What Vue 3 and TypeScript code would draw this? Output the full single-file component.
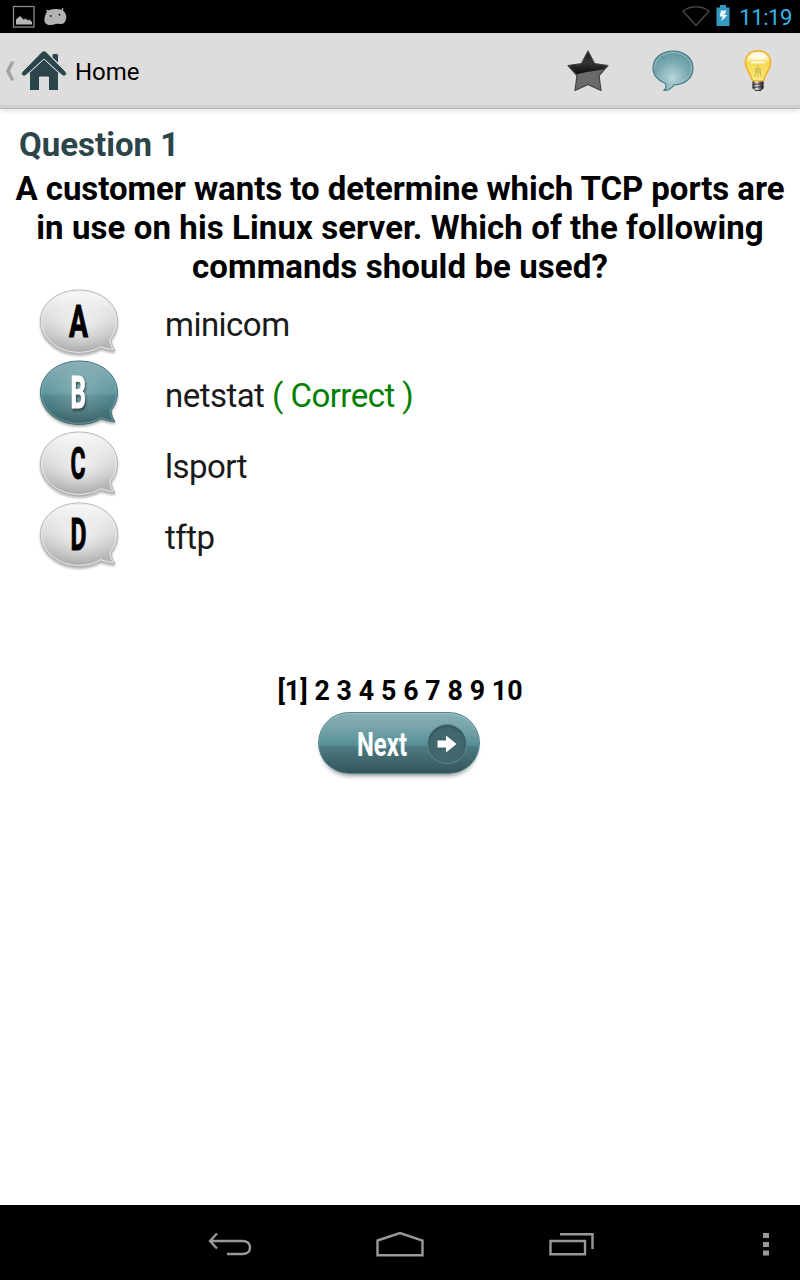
<script setup lang="ts">
import { ref } from "vue";

interface Answer {
  letter: string;
  text: string;
  correct: boolean;
  x: number;
  width: number;
}

const answers: Answer[] = [
  { letter: "A", text: "minicom", correct: false, x: 31, width: 19 },
  { letter: "B", text: "netstat", correct: true, x: 32.5, width: 15.5 },
  { letter: "C", text: "lsport", correct: false, x: 32.5, width: 15 },
  { letter: "D", text: "tftp", correct: false, x: 32.5, width: 16 },
];

const selected = ref(1);
const current = ref(1);
const pages = [1, 2, 3, 4, 5, 6, 7, 8, 9, 10];
const pageLabel = (page: number) => (page === current.value ? `[${page}]` : `${page}`);
const handleNext = () => {
  if (current.value < pages.length) current.value++;
};
</script>

<template>
  <div class="screen">
    <div class="status-bar">
      <div class="status-group">
        <svg class="picture" width="24" height="24" viewBox="0 0 24 24">
          <rect x="1.5" y="1.5" width="20.500" height="20.500" fill="none" stroke="#8c8c8c" stroke-width="1.300" />
          <path d="M4 19.500v-5l4-3.500 3.500 3.500 2.500-1 1.500 2 2-1 2.500 2.500v2.500z" fill="#b5b5b5" />
        </svg>
        <svg width="24" height="22" viewBox="0 0 24 22">
          <path
            d="M4 5.500Q11 3 18.500 5Q22.500 8 22.300 13Q21.500 18.500 17.500 19L12 18.800Q9 20.500 4.500 20Q.5 19 .3 15Q.8 9 4 5.500Z"
            fill="#b3b3b3"
          />
          <path d="M4.500 7.500L2.500 5M17.500 6.500L19 3.300" stroke="#b3b3b3" stroke-width="1.400" />
          <circle cx="6.800" cy="11" r="1" fill="#222" />
          <circle cx="15.500" cy="9.800" r="1" fill="#222" />
        </svg>
      </div>
      <div class="status-group right">
        <svg width="28" height="22" viewBox="0 0 28 22">
          <path d="M1 6C8 .5 20 .5 27 6L14 20.500Z" fill="none" stroke="#4c4c4c" stroke-width="1.300" />
        </svg>
        <svg class="battery" width="14" height="22" viewBox="0 0 14 22">
          <path d="M4 0h6v2.500h3.500V21H.5V2.500H4z" fill="#3298c0" />
          <path d="M5 5.500h5.500L8.500 10h3L5.200 16.500 6.500 11.500H3.500z" fill="#e4f4fa" />
        </svg>
        <span class="clock">11:19</span>
      </div>
    </div>

    <header class="action-bar">
      <div class="home">
        <svg width="10" height="22" viewBox="0 0 10 22">
          <path d="M6 1.500h3.500L5 11l4.500 9.500H6L.8 11z" fill="#a3a3a3" />
        </svg>
        <svg class="house" width="46" height="42" viewBox="0 0 46 42">
          <g fill="#2b454a" stroke="#edf1f1" stroke-width=".8">
            <path d="M31 5q0-1.500 2-1.500h2.500q2 0 2 2v8l-6.500-6z" />
            <path d="M23 9L37.500 22.500V40.500H27.500V27H18.500V40.500H8.500V22.500z" />
            <path
              d="M23 .8q1.200 0 2 .8L44.500 21.500q2 2 .3 4-1.800 1.500-3.800-.2L23 9 5 25.300q-2 1.700-3.800.2-1.700-2 .3-4L21 1.600q.8-.8 2-.8z"
            />
          </g>
        </svg>
        <span class="home-label">Home</span>
      </div>
      <div class="actions">
        <svg width="42" height="42" viewBox="0 0 42 42">
          <defs>
            <linearGradient id="star-top" x1="0" y1="0" x2="0" y2="1">
              <stop offset="0" stop-color="#111" />
              <stop offset=".3" stop-color="#353535" />
              <stop offset=".55" stop-color="#111" />
              <stop offset="1" stop-color="#222" />
            </linearGradient>
            <clipPath id="star-clip">
              <path d="M21 1L27.500 13.500 41 15.500 32 25.500 34 40.500 21 34.500 8 40.500 10 25.500 1 15.500 14.500 13.500z" />
            </clipPath>
          </defs>
          <g clip-path="url(#star-clip)">
            <rect width="42" height="42" fill="url(#star-top)" />
            <path d="M0 30C12 20 27 23 42 18V42H0z" fill="#6a6a6a" />
          </g>
          <path
            d="M21 1L27.500 13.500 41 15.500 32 25.500 34 40.500 21 34.500 8 40.500 10 25.500 1 15.500 14.500 13.500z"
            fill="none"
            stroke="#424242"
            stroke-width="1.200"
            stroke-linejoin="round"
          />
        </svg>
        <svg width="42" height="42" viewBox="0 0 42 42">
          <defs>
            <radialGradient id="talk" cx=".48" cy=".68" r=".7">
              <stop offset="0" stop-color="#b8d5da" />
              <stop offset=".6" stop-color="#78a9af" />
              <stop offset="1" stop-color="#5f969e" />
            </radialGradient>
          </defs>
          <path
            d="M21 1C32 1 41 8 41 18C41 28 33 34.500 22 35C20 38 16 40.500 12 40.500C14 38.500 14.500 36.500 13.500 33.500C6 31 1 25 1 18C1 8 10 1 21 1Z"
            fill="url(#talk)"
            stroke="#477b84"
            stroke-width="1.200"
          />
          <path
            d="M21 2.500C31 2.500 39.500 9 39.500 18C39.500 27 32 33 21.500 33.500M21 2.500C11 2.500 2.500 9 2.500 18"
            fill="none"
            stroke="#a9cbd0"
            stroke-width="1"
            opacity=".7"
          />
          <path d="M9 6l4 4" stroke="#477b84" stroke-width="1" fill="none" opacity=".7" />
        </svg>
        <svg width="42" height="44" viewBox="0 0 42 44">
          <defs>
            <linearGradient id="glass" x1="0" y1="0" x2="0" y2="1">
              <stop offset="0" stop-color="#fce49a" />
              <stop offset=".2" stop-color="#fff8ce" />
              <stop offset=".4" stop-color="#f3da55" />
              <stop offset="1" stop-color="#fae97e" />
            </linearGradient>
            <linearGradient id="cap">
              <stop offset="0" stop-color="#222" />
              <stop offset=".4" stop-color="#eee" />
              <stop offset=".6" stop-color="#888" />
              <stop offset="1" stop-color="#111" />
            </linearGradient>
          </defs>
          <path
            d="M21 1.800C29 1.800 33.500 7 33.500 14C33.500 21 27.500 25 26.500 32H15.500C14.500 25 8.500 21 8.500 14C8.500 7 13 1.800 21 1.800Z"
            fill="url(#glass)"
            stroke="#f5ac20"
            stroke-width="1.600"
          />
          <ellipse cx="21" cy="7" rx="8" ry="4" fill="#fff" opacity=".6" />
          <path d="M14 13.500h14" stroke="#fffbe0" stroke-width="1.800" />
          <path d="M18 20h6M18.500 23h5M21 16v12M18 28l1-8M24 28l-1-8" stroke="#bda348" stroke-width=".7" fill="none" />
          <path d="M15.500 32.500h11v7l-3 2.500h-5l-3-2.500z" fill="url(#cap)" />
          <path d="M15.500 35.500l11-1M15.500 38.500l11-1M18 41.500h6" stroke="#2c2c2c" stroke-width=".9" />
        </svg>
      </div>
    </header>

    <main class="content">
      <h1 class="title">Question 1</h1>
      <p class="question">
        <span class="tight">A customer wants to determine which TCP ports are</span><br />
        <span class="loose">in use on his Linux server. Which of the following</span><br />
        <span class="loose">commands should be used?</span>
      </p>

      <ul class="answers">
        <li v-for="(answer, index) in answers" :key="answer.letter" class="answer" @click="selected = index">
          <svg class="bubble" :class="{ active: selected === index }" width="82" height="71" viewBox="0 0 82 71">
            <defs>
              <radialGradient :id="`glow-${index}`" cx=".5" cy=".5" r=".5">
                <stop offset="0" stop-color="#fff" stop-opacity=".65" />
                <stop offset="1" stop-color="#fff" stop-opacity="0" />
              </radialGradient>
              <linearGradient :id="`fill-${index}`" x1="0" y1="0" x2="0" y2="1">
                <template v-if="selected === index">
                  <stop offset="0" stop-color="#8ab1b6" />
                  <stop offset=".5" stop-color="#60989f" />
                  <stop offset=".55" stop-color="#4d868c" />
                  <stop offset="1" stop-color="#3c6268" />
                </template>
                <template v-else>
                  <stop offset="0" stop-color="#fafafa" />
                  <stop offset=".5" stop-color="#d8d8d8" />
                  <stop offset="1" stop-color="#a8a8a8" />
                </template>
              </linearGradient>
            </defs>
            <path
              class="bubble-shape"
              d="M41 2C63 2 79.500 15.500 79.500 33.500C79.500 40.500 77 46.500 73 51.500Q73.500 57.500 77 63Q69 62 63 60C57 63.500 49.500 65.500 41 65.500C19.500 65.500 2.500 51.500 2.500 33.500C2.500 15.500 19.500 2 41 2Z"
              :fill="`url(#fill-${index})`"
            />
            <ellipse class="glow" cx="42" cy="35" rx="36" ry="29" :fill="`url(#glow-${index})`" />
            <path
              class="rim"
              d="M41 3.200C62 3.200 78.300 16 78.300 33.500C78.300 40.500 76 46 71.800 51.200Q72.300 56.500 75 61.500Q68 60.800 62.800 58.700C56.500 62.500 49 64.300 41 64.300C20.500 64.300 3.700 50.800 3.700 33.500C3.700 16 20.500 3.200 41 3.200Z"
            />
            <text class="letter" :x="answer.x" y="48.500" :textLength="answer.width" lengthAdjust="spacingAndGlyphs">
              {{ answer.letter }}
            </text>
          </svg>
          <span class="answer-text">
            {{ answer.text }}
            <span v-if="answer.correct" class="correct">( Correct )</span>
          </span>
        </li>
      </ul>

      <nav class="pager">
        <span v-for="page in pages" :key="page">{{ pageLabel(page) }}</span>
      </nav>
      <button class="next" @click="handleNext">
        <svg class="next-label" width="70" height="54" viewBox="0 0 70 54">
          <text x="1" y="38.500" textLength="50" lengthAdjust="spacingAndGlyphs">Next</text>
        </svg>
        <span class="next-arrow">
          <svg width="20" height="18" viewBox="0 0 20 18">
            <path d="M.5 5.500H9V.5L19.500 9 9 17.500V12.500H.5z" fill="#fff" />
          </svg>
        </span>
      </button>
    </main>

    <footer class="nav-bar">
      <svg class="back" width="44" height="24" viewBox="0 0 44 24" fill="none" stroke="#999" stroke-width="2.400">
        <path d="M2 9H34Q42 9 42 15.500T34 22H19M9 1.500L2 9l7 7.500" />
      </svg>
      <svg class="home-key" width="48" height="26" viewBox="0 0 48 26" fill="none" stroke="#999" stroke-width="2.400">
        <path d="M1.500 9.500L24 2l22.500 7.500V24.300h-45z" />
      </svg>
      <svg class="recent" width="46" height="24" viewBox="0 0 46 24" fill="none" stroke="#999" stroke-width="2.400">
        <path d="M1.500 9h34.500v13.300H1.500zM11 2.200h32.500V17" />
      </svg>
      <svg class="more" width="6" height="24" viewBox="0 0 6 24" fill="#999">
        <path d="M0 1h6v5H0zM0 10h6v5H0zM0 18.500h6v5H0z" />
      </svg>
    </footer>
  </div>
</template>

<style>
body {
  margin: 0;
}
</style>

<style scoped>
.screen {
  display: flex;
  flex-direction: column;
  width: 800px;
  height: 1280px;
  background: #fff;
  color: #000;
  font-family: Roboto, sans-serif;
}

svg {
  display: block;
  flex: none;
}

.status-bar {
  display: flex;
  justify-content: space-between;
  box-sizing: border-box;
  height: 33px;
  padding: 5px 8px 0 12px;
  background: #000;
}

.status-group {
  display: flex;
  gap: 8px;
}

.right {
  gap: 9px;
}

.battery {
  margin-left: -3px;
}

.clock {
  color: #33b5e5;
  font-size: 22px;
  line-height: 26px;
  letter-spacing: -0.4px;
}

.action-bar {
  display: flex;
  align-items: center;
  justify-content: space-between;
  box-sizing: border-box;
  height: 76px;
  padding-right: 21.5px;
  background: #ddd;
  border-bottom: 1px solid #b7b7b7;
  box-shadow: inset 0 -3px #d0d0d0, 0 1px 6px rgba(0, 0, 0, 0.16);
}

.home {
  display: flex;
  align-items: center;
  padding-left: 5px;
}

.house {
  margin-left: 6px;
}

.home-label {
  margin-left: 8px;
  font-size: 24px;
  line-height: 28px;
  padding-top: 3px;
}

.actions {
  display: flex;
  align-items: center;
  gap: 43px;
}

.content {
  display: flex;
  flex: 1;
  flex-direction: column;
  align-items: center;
  padding-top: 16px;
}

.title {
  align-self: flex-start;
  margin: 0 0 5px 19px;
  color: #2b454a;
  font-size: 33px;
  font-weight: 700;
  line-height: 39px;
}

.question {
  margin: 0;
  font-size: 33px;
  font-weight: 700;
  line-height: 39px;
  text-align: center;
  white-space: nowrap;
}

.tight {
  letter-spacing: -0.06px;
}

.loose {
  letter-spacing: 0.09px;
}

.answers {
  align-self: stretch;
  margin: 2px 0 0;
  padding: 0;
  list-style: none;
}

.answer {
  display: flex;
  align-items: center;
  height: 71px;
  padding-left: 38px;
  cursor: pointer;
}

.bubble-shape {
  stroke: #b4b4b4;
  stroke-width: 1;
  filter: drop-shadow(0 2px 1px rgba(0, 0, 0, 0.28));
}

.rim {
  fill: none;
  stroke: #ececec;
  stroke-width: 1;
}

.letter {
  fill: #000;
  stroke: #000;
  stroke-width: 1;
  font-size: 44px;
  font-weight: 700;
}

.active .bubble-shape {
  stroke: #447077;
}

.active .rim {
  stroke: #87b3b8;
  stroke-width: 0.6;
}

.active .glow {
  opacity: 0.3;
}

.active .letter {
  fill: #fff;
  stroke: #fff;
  filter: drop-shadow(1px 2px 1px rgba(0, 0, 0, 0.5));
}

.answer-text {
  margin-left: 45px;
  padding-top: 1px;
  color: #1a1a1a;
  font-size: 33px;
  line-height: 39px;
  letter-spacing: -0.53px;
}

.correct {
  color: #008000;
}

.pager {
  display: flex;
  gap: 6.8px;
  margin-top: 103px;
  font-size: 26.8px;
  font-weight: 700;
  line-height: 32px;
}

.next {
  display: flex;
  align-items: center;
  box-sizing: border-box;
  width: 162px;
  height: 62px;
  margin-top: 5px;
  margin-right: 2px;
  padding: 1px 12px 0 37px;
  border: 1px solid #4e858b;
  border-radius: 31px;
  background: linear-gradient(#88b0b5, #73a2a8 28%, #558e96 54%, #4c7c82 55%, #365459);
  box-shadow: inset 0 1px #a3c2c6, 0 5px 4px -3px rgba(0, 0, 0, 0.4);
  cursor: pointer;
}

.next-label {
  fill: #fff;
  font-family: Roboto, sans-serif;
  font-size: 33px;
  font-weight: 700;
}

.next-arrow {
  display: flex;
  align-items: center;
  justify-content: center;
  box-sizing: border-box;
  width: 40px;
  height: 40px;
  margin-left: 1px;
  flex: none;
  border: 1px solid #5b8c92;
  border-radius: 50%;
  background: #42686e;
  box-shadow: inset 0 1px 3px #29494d;
}

.nav-bar {
  display: flex;
  align-items: center;
  height: 75px;
  padding-top: 2px;
  box-sizing: border-box;
  background: #000;
}

.back {
  margin-left: 208px;
}

.home-key {
  margin-left: 124px;
}

.recent {
  margin-left: 125px;
}

.more {
  margin-left: 168px;
}
</style>
